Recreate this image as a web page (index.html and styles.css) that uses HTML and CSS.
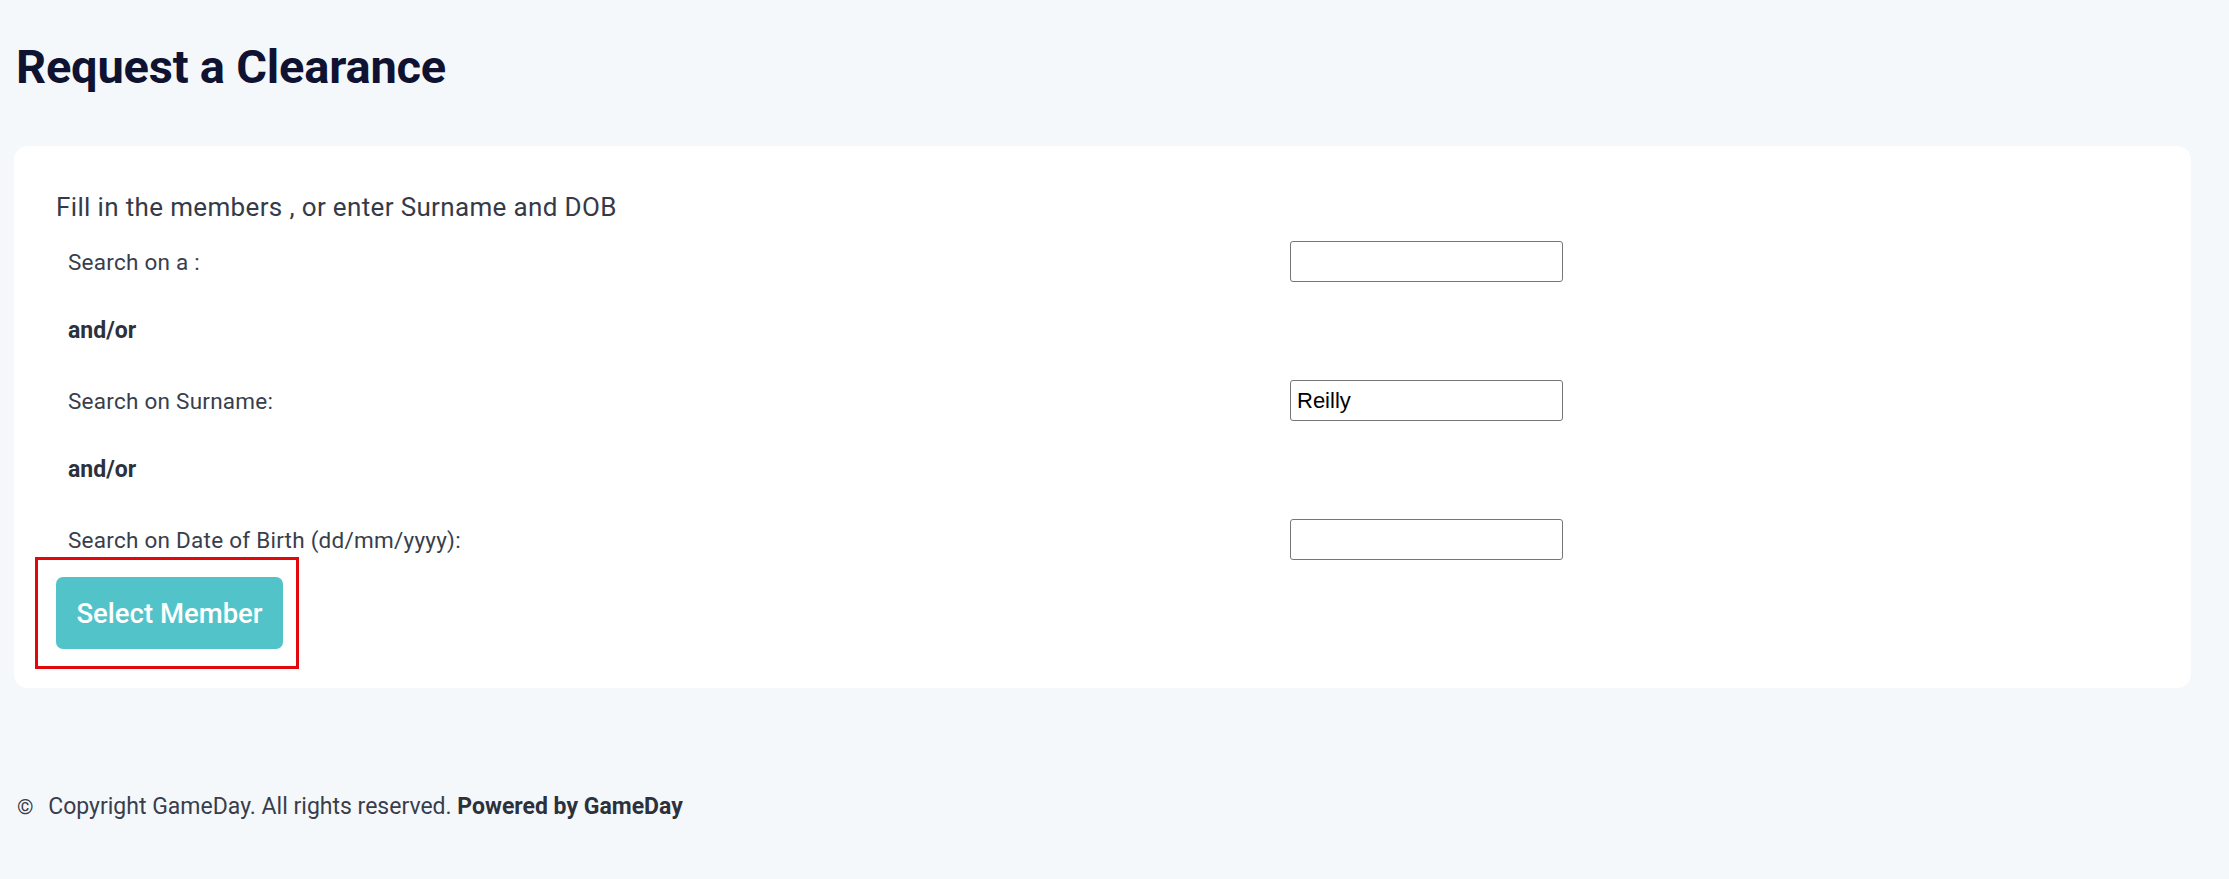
FILE: index.html
```html
<!DOCTYPE html>
<html lang="en">
<head>
<meta charset="UTF-8">
<meta name="viewport" content="width=device-width, initial-scale=1.0">
<title>Request a Clearance</title>
<link rel="stylesheet" href="styles.css">
</head>
<body>
<div class="page">
    <h1 class="page-title">Request a Clearance</h1>

    <div class="card">
        <p class="intro">Fill in the members , or enter Surname and DOB</p>
        <div class="search-form">
            <div class="label">Search on a :</div>
            <div class="field"><input type="text" class="text-input"></div>

            <div class="or">and/or</div>
            <div></div>

            <div class="label">Search on Surname:</div>
            <div class="field"><input type="text" class="text-input" value="Reilly"></div>

            <div class="or">and/or</div>
            <div></div>

            <div class="label">Search on Date of Birth (dd/mm/yyyy):</div>
            <div class="field"><input type="text" class="text-input"></div>
        </div>
        <div class="actions">
            <button class="btn-select">Select Member</button>
        </div>
    </div>
</div>

<footer class="footer">
    <span class="copy">&copy;</span> Copyright GameDay. All rights reserved. <strong>Powered by GameDay</strong>
</footer>
</body>
</html>
```

FILE: styles.css
```css
body {
    margin: 0;
    padding: 0;
    background-color: #f5f8fb;
    font-family: Roboto, "Noto Sans", sans-serif;
    color: #383e4c;
}

.page {
    padding: 0 38px 0 14px;
}

.page-title {
    margin: 42px 0 54px 2px;
    font-size: 47px;
    line-height: 50px;
    font-weight: 700;
    color: #0f1331;
    letter-spacing: -0.2px;
}

.card {
    background-color: #fff;
    border-radius: 14px;
    padding: 48px 42px 39px 42px;
}

.intro {
    margin: 0 0 20px 0;
    font-size: 26px;
    line-height: 27px;
    letter-spacing: 0.35px;
    color: #353a48;
}

.search-form {
    display: grid;
    grid-template-columns: 1222px 273px;
    align-items: center;
    row-gap: 36px;
    padding-left: 12px;
}

.label {
    font-size: 22.5px;
    line-height: 26px;
    letter-spacing: 0.25px;
    color: #383e4c;
}

.or {
    font-size: 23px;
    font-weight: 700;
    line-height: 26px;
    color: #2c313c;
}

.field {
    height: 41px;
}

.text-input {
    box-sizing: border-box;
    width: 273px;
    height: 41px;
    border: 1px solid #767676;
    border-radius: 3px;
    padding: 0 6px;
    font-family: "Liberation Sans", Arial, sans-serif;
    font-size: 22px;
    color: #000;
    background: #fff;
}

.actions {
    margin-top: 17px;
    position: relative;
    width: 227px;
}

.btn-select {
    display: block;
    width: 227px;
    height: 72px;
    border: none;
    border-radius: 7px;
    background-color: #52c4c9;
    color: #fff;
    font-family: Roboto, sans-serif;
    font-size: 27.5px;
    font-weight: 500;
    cursor: pointer;
}

/* highlight box drawn over the button */
.actions::after {
    content: "";
    position: absolute;
    left: -21px;
    top: -20px;
    width: 258px;
    height: 106px;
    border: 3px solid #e3070b;
    pointer-events: none;
}

.footer {
    padding: 105px 17px 40px 17px;
    font-size: 23px;
    line-height: 27px;
    color: #383e4c;
}

.footer .copy {
    font-size: 21px;
    margin-right: 9px;
}

.footer strong {
    color: #2c313c;
    font-weight: 700;
}
```
